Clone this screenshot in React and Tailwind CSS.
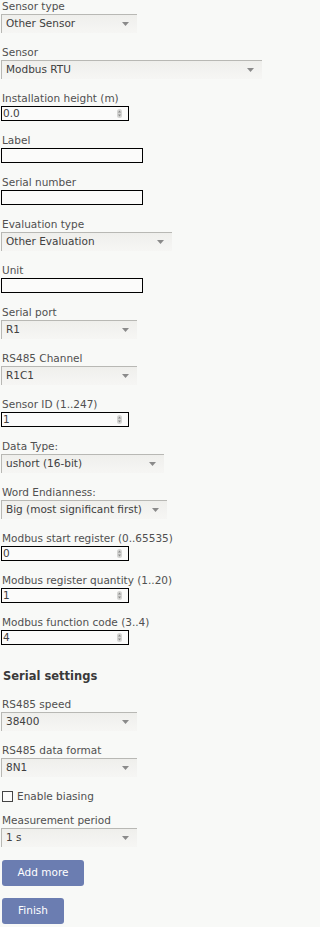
import React from 'react';

const font = { fontFamily: '"DejaVu Sans", Verdana, sans-serif' };

function Field({ label, children }) {
  return (
    <div className="mb-[13px]">
      <div className="text-[10.5px] leading-[13px] text-[#505050] mb-[1px] pl-[1px]">{label}</div>
      {children}
    </div>
  );
}

function Select({ value, w }) {
  return (
    <div
      className={`h-[19px] flex items-center justify-between pl-[4px] pr-[8px] border-t border-l border-[#b8b8b4] bg-gradient-to-b from-[#efefec] to-[#f6f6f4] ${w}`}
    >
      <span className="text-[10.5px] text-[#404040] whitespace-nowrap">{value}</span>
      <svg width="7" height="4" viewBox="0 0 7 4">
        <path d="M0 0h7L3.5 4z" fill="#8a8a8a" />
      </svg>
    </div>
  );
}

function TextBox({ value = '', spin = false, w = 'w-[142px]' }) {
  return (
    <div className={`h-[15px] border border-black bg-[#fbfbfa] flex items-center justify-between pl-[1px] pr-[6px] ${w}`}>
      <span className="text-[10.5px] text-[#404040] leading-none">{value}</span>
      {spin && (
        <svg width="5" height="9" viewBox="0 0 5 9">
          <rect x="0" y="0" width="5" height="9" rx="2.5" fill="#d4d4d2" />
          <path d="M1 3.5L2.5 1.5L4 3.5z M1 5.5L2.5 7.5L4 5.5z" fill="#8a8a8a" />
        </svg>
      )}
    </div>
  );
}

export default function App() {
  return (
    <div className="min-h-screen bg-[#f8f9f7] px-[1px] text-[#4d4d4d]" style={font}>
      <div>
        <Field label="Sensor type">
          <Select value="Other Sensor" w="w-[136px]" />
        </Field>
        <Field label="Sensor">
          <Select value="Modbus RTU" w="w-[261px]" />
        </Field>
        <Field label="Installation height (m)">
          <TextBox value="0.0" spin w="w-[128px]" />
        </Field>
        <Field label="Label">
          <TextBox />
        </Field>
        <Field label="Serial number">
          <TextBox />
        </Field>
        <Field label="Evaluation type">
          <Select value="Other Evaluation" w="w-[171px]" />
        </Field>
        <Field label="Unit">
          <TextBox />
        </Field>
        <Field label="Serial port">
          <Select value="R1" w="w-[136px]" />
        </Field>
        <Field label="RS485 Channel">
          <Select value="R1C1" w="w-[136px]" />
        </Field>
        <Field label="Sensor ID (1..247)">
          <TextBox value="1" spin w="w-[128px]" />
        </Field>
        <Field label="Data Type:">
          <Select value="ushort (16-bit)" w="w-[163px]" />
        </Field>
        <Field label="Word Endianness:">
          <Select value="Big (most significant first)" w="w-[166px]" />
        </Field>
        <Field label="Modbus start register (0..65535)">
          <TextBox value="0" spin w="w-[128px]" />
        </Field>
        <Field label="Modbus register quantity (1..20)">
          <TextBox value="1" spin w="w-[128px]" />
        </Field>
        <Field label="Modbus function code (3..4)">
          <TextBox value="4" spin w="w-[128px]" />
        </Field>

        <h3 className="mt-[24px] mb-[15px] text-[11.5px] leading-[14px] font-bold text-[#3a3a3a] pl-[2px]">Serial settings</h3>

        <Field label="RS485 speed">
          <Select value="38400" w="w-[136px]" />
        </Field>
        <Field label="RS485 data format">
          <Select value="8N1" w="w-[136px]" />
        </Field>
        <label className="flex items-center gap-[4px] mb-[11px] text-[10.5px] leading-[13px] text-[#505050]">
          <span className="w-[11px] h-[11px] border border-[#444] bg-[#fbfbfa] ml-[1px]" />
          Enable biasing
        </label>
        <Field label="Measurement period">
          <Select value="1 s" w="w-[136px]" />
        </Field>

        <div className="flex flex-col items-start gap-[12px] pl-[1px]">
          <button className="h-[26px] w-[82px] rounded-[3px] bg-[#6b7db1] text-white text-[10.5px]">Add more</button>
          <button className="h-[26px] w-[62px] rounded-[3px] bg-[#6b7db1] text-white text-[10.5px]">Finish</button>
        </div>
      </div>
    </div>
  );
}
